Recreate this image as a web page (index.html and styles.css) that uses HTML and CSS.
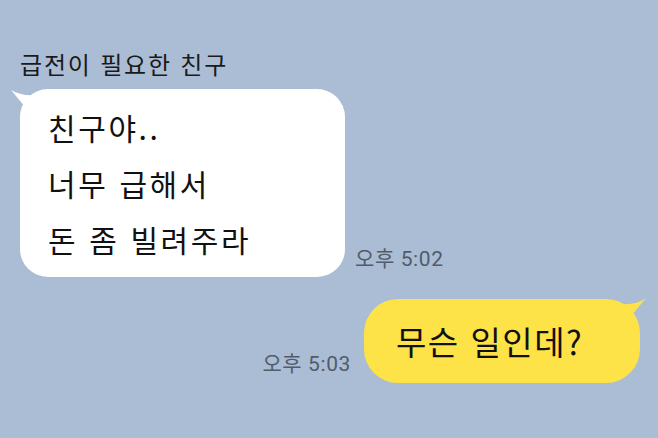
FILE: index.html
```html
<!DOCTYPE html>
<html lang="ko">
<head>
    <meta charset="UTF-8">
    <meta name="viewport" content="width=device-width, initial-scale=1.0">
    <title>채팅</title>
    <link rel="stylesheet" href="styles.css">
</head>
<body>
    <div class="chat">
        <div class="msg-in">
            <div class="sender">급전이 필요한 친구</div>
            <div class="row">
                <div class="bubble bubble-in">
                    <svg class="tail tail-in" width="30" height="30" viewBox="0 0 30 30">
                        <path d="M1 1 C8 5 16 7 26 6 L26 28 C18 22 10 12 1 1 Z" fill="#ffffff"/>
                    </svg>
                    <p>친구야..</p>
                    <p>너무 급해서</p>
                    <p>돈 좀 빌려주라</p>
                </div>
                <span class="time time-in">오후 5:02</span>
            </div>
        </div>

        <div class="msg-out">
            <span class="time time-out">오후 5:03</span>
            <div class="bubble bubble-out">
                <svg class="tail tail-out" width="30" height="30" viewBox="0 0 30 30">
                    <path d="M29 1 C22 6 14 8 4 7 L4 28 C12 22 20 12 29 1 Z" fill="#fde347"/>
                </svg>
                <p>무슨 일인데?</p>
            </div>
        </div>
    </div>
</body>
</html>
```

FILE: styles.css
```css
body {
    margin: 0;
    background-color: #aabdd4;
    font-family: "Noto Sans CJK KR", "Noto Sans", sans-serif;
    color: #111;
    width: 658px;
    height: 438px;
    overflow: hidden;
}
.chat {
    padding: 47px 18px 0 20px;
}
.sender {
    font-size: 24px;
    letter-spacing: 1.8px;
    line-height: 34px;
    color: #1a1a1a;
    margin-bottom: 8px;
}
.row {
    display: flex;
    align-items: flex-end;
}
.bubble {
    position: relative;
}
.bubble p {
    margin: 0;
}
.bubble-in {
    width: 325px;
    box-sizing: border-box;
    background-color: #fff;
    border-radius: 28px;
    padding: 10px 28px 10px;
    font-size: 30px;
    letter-spacing: 2.6px;
    line-height: 56px;
}
.tail {
    position: absolute;
    top: 0;
}
.tail-in {
    left: -10px;
}
.tail-out {
    right: -7px;
    top: -2px;
}
.time {
    font-family: Roboto, "Noto Sans CJK KR", sans-serif;
    font-size: 21px;
    letter-spacing: 0.6px;
    color: #525c69;
}
.time-in {
    margin-left: 10px;
    margin-bottom: 5px;
}
.msg-out {
    display: flex;
    justify-content: flex-end;
    align-items: flex-end;
    margin-top: 22px;
}
.time-out {
    margin-right: 13px;
    margin-bottom: 6px;
}
.bubble-out {
    width: 276px;
    height: 84px;
    box-sizing: border-box;
    background-color: #fde347;
    border-radius: 34px;
    padding: 0 32px;
    font-size: 33px;
    letter-spacing: 1.5px;
    line-height: 84px;
}
```
